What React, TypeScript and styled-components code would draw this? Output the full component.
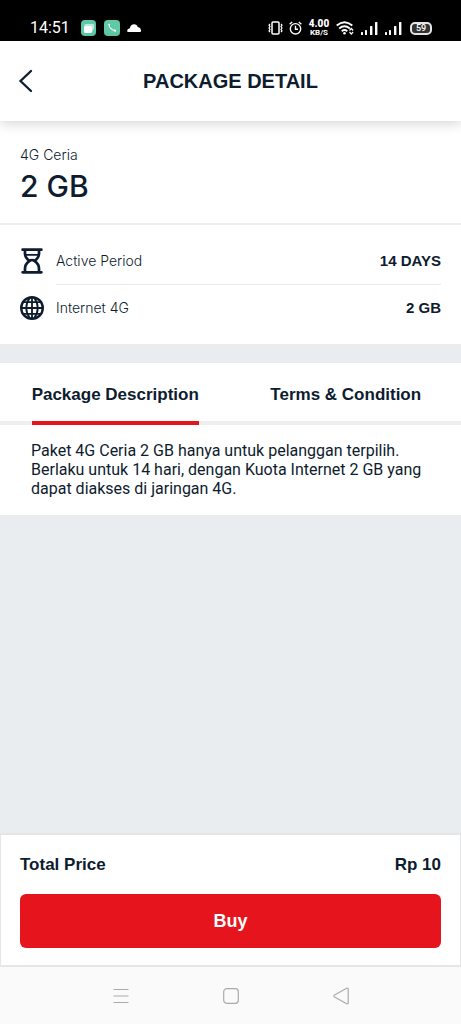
import React, { useState } from "react";
import styled, { createGlobalStyle } from "styled-components";

const ink = "#0d1c2e";
const red = "#e5141d";
const sans = `"Liberation Sans", Arial, sans-serif`;
const light = `Inter, "Liberation Sans", sans-serif`;

const GlobalStyle = createGlobalStyle`
  *, *::before, *::after { box-sizing: border-box; }
  body { margin: 0; background: #e9edf0; color: ${ink}; font-family: ${sans}; }
  button { border: 0; padding: 0; background: none; color: inherit; font: inherit; cursor: pointer; }
  h1, h2, p, dl, dt, dd { margin: 0; font: inherit; }
  svg { display: block; flex: none; }
`;

const Screen = styled.div`
  min-height: 100vh;
  display: flex;
  flex-direction: column;
`;

const StatusBar = styled.div`
  display: flex;
  justify-content: space-between;
  align-items: center;
  height: 41px;
  padding: 15px 29px 0 30px;
  background: #000;
  color: #fff;
`;

const StatusGroup = styled.div<{ $gap: number }>`
  display: flex;
  align-items: center;
  gap: ${(p) => p.$gap}px;
`;

const Clock = styled.time`
  margin-right: 4px;
  font: 400 16px/20px Roboto, sans-serif;
`;

const Speed = styled.div`
  display: flex;
  flex-direction: column;
  align-items: center;
  width: 22px;
  font: 700 8px/8px Roboto, sans-serif;
  white-space: nowrap;

  strong { font-size: 10px; line-height: 10px; }
`;

const Battery = styled.div`
  width: 22px;
  height: 13px;
  margin-left: 2px;
  border: 2px solid #e6e6e6;
  border-radius: 5px;
  background: #333;
  font: 500 9px/9px Roboto, sans-serif;
  text-align: center;
`;

const Header = styled.header`
  position: relative;
  display: grid;
  grid-template-columns: 40px 1fr 40px;
  align-items: center;
  height: 80px;
  padding: 0 12px;
  background: #fff;
  box-shadow: 0 2px 12px rgba(0, 0, 0, 0.18);
`;

const BackButton = styled.button`
  display: flex;
  align-items: center;
  height: 40px;
  padding-left: 6px;
`;

const Title = styled.h1`
  font-size: 20px;
  font-weight: 700;
  line-height: 24px;
  text-align: center;
`;

const Summary = styled.section`
  padding: 24px 20px 16px;
  border-bottom: 2px solid #eeeeee;
  background: #fff;
  font-family: ${light};
`;

const PlanName = styled.p`
  font-size: 14px;
  font-weight: 300;
  line-height: 20px;
`;

const PlanSize = styled.h2`
  font-size: 30px;
  font-weight: 500;
  line-height: 42px;
`;

const Details = styled.dl`
  padding: 12px 20px 13px;
  background: #fff;
`;

const DetailRow = styled.div`
  display: flex;
  align-items: center;
  gap: 12px;

  & + & > div { border-top: 1px solid #e8eaec; }
`;

const DetailBody = styled.div`
  flex: 1;
  display: flex;
  justify-content: space-between;
  align-items: center;
  height: 47px;
  line-height: 20px;

  dt { font-family: ${light}; font-size: 14px; font-weight: 300; }
  dd { font-size: 15px; font-weight: 700; }
`;

const Tabs = styled.div`
  display: grid;
  grid-template-columns: 1fr 1fr;
  justify-items: center;
  margin-top: 19px;
  background: #fff;
  box-shadow: inset 0 -4px #eeeeee;
`;

const Tab = styled.button<{ $active: boolean }>`
  height: 62px;
  padding-top: 6px;
  border-bottom: 4px solid ${(p) => (p.$active ? red : "transparent")};
  font-size: 17px;
  font-weight: 700;
  line-height: 20px;
`;

const Description = styled.p`
  padding: 16px 20px 17px 31px;
  background: #fff;
  font: 400 16px/19px Roboto, sans-serif;
`;

const Footer = styled.footer`
  margin-top: auto;
  padding: 19px 19px 17px;
  border: 1px solid #e4e6e7;
  border-width: 2px 1px;
  background: #fff;
`;

const Total = styled.div`
  display: flex;
  justify-content: space-between;
  margin-bottom: 18px;
  font-size: 17px;
  font-weight: 700;
  line-height: 22px;
`;

const BuyButton = styled.button`
  width: 100%;
  height: 54px;
  border-radius: 6px;
  background: ${red};
  color: #fff;
  font-size: 18px;
  font-weight: 700;
`;

const NavBar = styled.nav`
  display: flex;
  justify-content: center;
  gap: 86px;
  height: 57px;
  background: #fafafa;
`;

const NavButton = styled.button`
  display: flex;
  align-items: center;
  justify-content: center;
  width: 24px;
`;

const MessageIcon = () => (
  <svg width="16" height="16" viewBox="0 0 16 16">
    <rect width="15" height="16" rx="4" fill="#5fc9a8" />
    <path d="M5 4h7q1 0 1 1v4l-1 1-1 2q0 1-1 1H4q-1 0-1-1V7q0-3 2-3Z" fill="#b9ebdb" />
    <rect x="3" y="6" width="8" height="7" rx="2" fill="#fff" />
  </svg>
);

const PhoneIcon = () => (
  <svg width="16" height="16" viewBox="0 0 16 16">
    <rect width="16" height="16" rx="4" fill="#5fc9a8" />
    <path d="M5 4.5q0 2.5 2 4.2t4.5 2.4" fill="none" stroke="#fff" strokeWidth="1.1" />
    <path d="m4.4 4 1-.2.7 1.7-1 .9Zm5.2 6.3 1-1 1.5.8-.1 1.4-1.6.1Z" fill="#fff" />
  </svg>
);

const CloudIcon = () => (
  <svg width="14" height="8" viewBox="0 0 14 8">
    <path d="M1 8C-.5 8 0 4.600 2.800 4.200 3.300 1.800 5 .3 7 .3S10.300 1.400 10.700 3C13 3.200 14 5 14 6.800 14 7.600 13.600 8 12.800 8Z" fill="#fff" />
  </svg>
);

const VibrateIcon = () => (
  <svg width="15" height="14" viewBox="0 0 15 14" fill="none" stroke="#fff">
    <rect x="4" y="1" width="7" height="12" rx="1" strokeWidth="1.5" />
    <path d="M2 3 1 4.200 2 5.500 1 7l1 1.500L1 10l1 1.200M13 3l1 1.200L13 5.500 14 7l-1 1.500L14 10l-1 1.200" strokeWidth="1.2" />
  </svg>
);

const AlarmIcon = () => (
  <svg width="13" height="14" viewBox="0 0 13 14" fill="none" stroke="#fff" strokeWidth="1.4">
    <circle cx="6.5" cy="7.8" r="5.2" />
    <path d="M6.500 4.800v3.400H9M.6 3.200 3.200 1M12.400 3.200 9.800 1" />
  </svg>
);

const WifiIcon = () => (
  <svg width="18" height="14" viewBox="0 0 18 14" fill="none" stroke="#fff" strokeWidth="1.8">
    <path d="M.7 4.500q7.800-6.600 15.600 0M3.200 7.500q5.300-4.400 10.600 0M5.700 10.200q2.800-2.300 5.600 0" />
    <circle cx="8.5" cy="12.3" r="1.3" fill="#fff" stroke="none" />
    <path d="m13.500 9.500 1.800-2 1.800 2M13.500 11l1.800 2 1.800-2" strokeWidth="1.2" />
  </svg>
);

const SignalIcon = () => (
  <svg width="18" height="13" viewBox="0 0 18 13" fill="#fff">
    <rect x="1" y="10" width="2" height="3" rx=".6" />
    <rect x="5" y="8" width="2" height="5" rx=".6" />
    <rect x="10" y="4" width="2.4" height="9" rx=".6" />
    <rect x="15" width="2.4" height="13" rx=".6" />
  </svg>
);

const BackIcon = () => (
  <svg width="16" height="24" viewBox="0 0 16 24" fill="none" stroke={ink} strokeWidth="2.3" strokeLinecap="round">
    <path d="M13 2 2.500 12 13 22" />
  </svg>
);

const HourglassIcon = () => (
  <svg width="24" height="26" viewBox="0 0 24 26" fill="none" stroke={ink} strokeWidth="2.7" strokeLinecap="round">
    <path d="M2.600 1.700h18.800M2.600 24.300h18.800" />
    <path d="M5 2.500v3q0 4.500 4.500 7.300Q5 16 5 20.500v3M19 2.500v3q0 4.500-4.500 7.300Q19 16 19 20.500v3" />
    <path d="M6 6.800h12" strokeWidth="1.8" />
    <path d="M9 12.800q1.500-.8 3-.8t3 .8" />
  </svg>
);

const GlobeIcon = () => (
  <svg width="24" height="24" viewBox="0 0 24 24" fill="none" stroke={ink}>
    <circle cx="12" cy="12" r="10.8" strokeWidth="2.4" />
    <path d="M12 1v22M1 12h22M3.500 6.200h17M3.500 17.800h17M10 1.500q-7.500 10.500 0 21M14 1.500q7.500 10.500 0 21" strokeWidth="1.8" />
  </svg>
);

const MenuIcon = () => (
  <svg width="16" height="16" viewBox="0 0 16 16" stroke="#aaa" strokeWidth="1.2">
    <path d="M.5 1.500h15M.5 8h15M.5 14.500h15" />
  </svg>
);

const HomeIcon = () => (
  <svg width="16" height="16" viewBox="0 0 16 16" fill="none" stroke="#aaa" strokeWidth="1.2">
    <rect x=".7" y=".7" width="14.6" height="14.6" rx="3" />
  </svg>
);

const ReturnIcon = () => (
  <svg width="16" height="18" viewBox="0 0 16 18" fill="none" stroke="#aaa" strokeWidth="1.2" strokeLinejoin="round">
    <path d="M13.700 1.200 1.500 8q-1.300 1 0 2l12.200 6.800q1.500.5 1.500-1V2.200q0-1.500-1.500-1Z" />
  </svg>
);

const details = [
  { label: "Active Period", value: "14 DAYS", icon: <HourglassIcon /> },
  { label: "Internet 4G", value: "2 GB", icon: <GlobeIcon /> },
];

const tabs = ["Package Description", "Terms & Condition"];

export default function App() {
  const [active, setActive] = useState(0);

  return (
    <Screen>
      <GlobalStyle />
      <StatusBar>
        <StatusGroup $gap={7}>
          <Clock>14:51</Clock>
          <MessageIcon />
          <PhoneIcon />
          <CloudIcon />
        </StatusGroup>
        <StatusGroup $gap={6}>
          <VibrateIcon />
          <AlarmIcon />
          <Speed><strong>4.00</strong>KB/S</Speed>
          <WifiIcon />
          <SignalIcon />
          <SignalIcon />
          <Battery>59</Battery>
        </StatusGroup>
      </StatusBar>
      <Header>
        <BackButton aria-label="Back"><BackIcon /></BackButton>
        <Title>PACKAGE DETAIL</Title>
      </Header>
      <main>
        <Summary>
          <PlanName>4G Ceria</PlanName>
          <PlanSize>2 GB</PlanSize>
        </Summary>
        <Details>
          {details.map((d) => (
            <DetailRow key={d.label}>
              {d.icon}
              <DetailBody>
                <dt>{d.label}</dt>
                <dd>{d.value}</dd>
              </DetailBody>
            </DetailRow>
          ))}
        </Details>
        <Tabs role="tablist">
          {tabs.map((label, i) => (
            <Tab key={label} role="tab" aria-selected={active === i} $active={active === i} onClick={() => setActive(i)}>
              {label}
            </Tab>
          ))}
        </Tabs>
        <Description>
          Paket 4G Ceria 2 GB hanya untuk pelanggan terpilih. Berlaku untuk 14 hari, dengan Kuota Internet 2 GB yang dapat diakses di jaringan 4G.
        </Description>
      </main>
      <Footer>
        <Total><span>Total Price</span><span>Rp 10</span></Total>
        <BuyButton>Buy</BuyButton>
      </Footer>
      <NavBar>
        <NavButton aria-label="Recent apps"><MenuIcon /></NavButton>
        <NavButton aria-label="Home"><HomeIcon /></NavButton>
        <NavButton aria-label="Return"><ReturnIcon /></NavButton>
      </NavBar>
    </Screen>
  );
}
